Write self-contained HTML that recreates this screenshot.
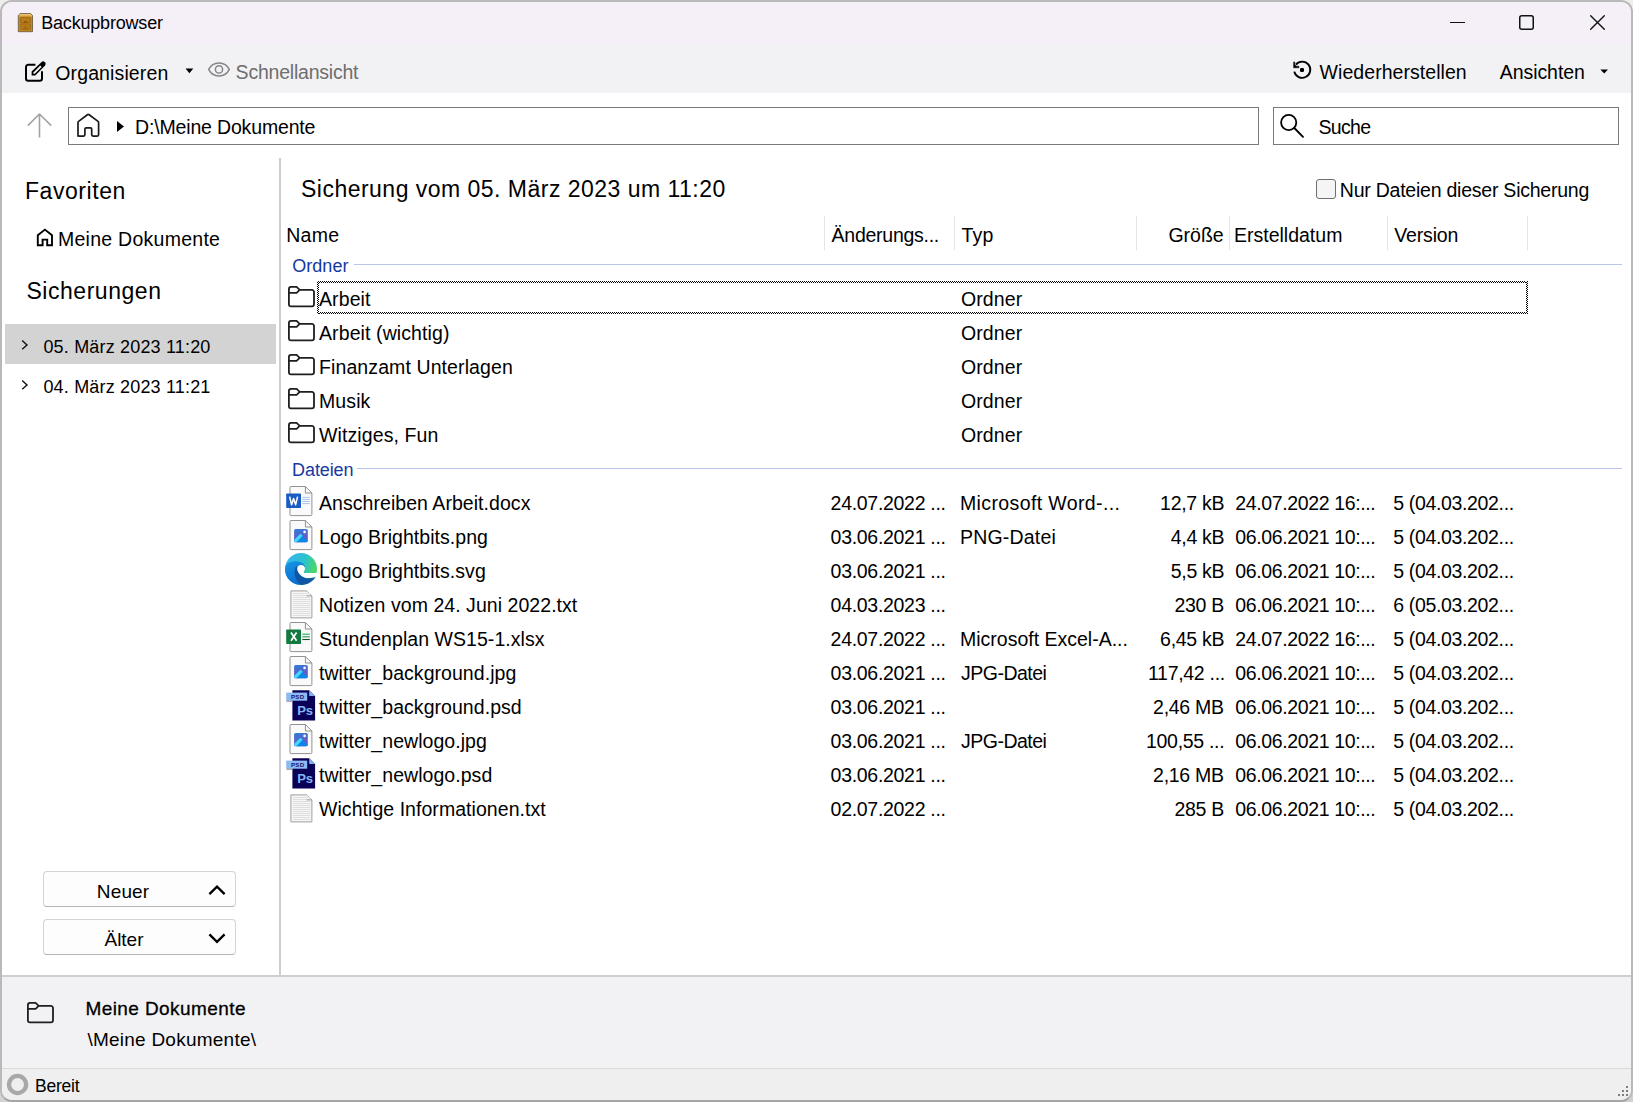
<!DOCTYPE html>
<html><head><meta charset="utf-8"><title>Backupbrowser</title>
<style>
html,body{margin:0;padding:0;width:1633px;height:1102px;overflow:hidden;background:#e9e9e9}
body{position:relative;font-family:'Liberation Sans', sans-serif;color:#000}
.t{position:absolute;white-space:pre;font-family:'Liberation Sans', sans-serif}
.a{position:absolute}
svg{position:absolute;overflow:visible}
</style></head><body>
<!-- window frame -->
<div class="a" style="left:0;top:0;width:1633px;height:1102px;background:#eeeeee"></div>
<div class="a" style="left:0;top:1086px;width:16px;height:16px;background:#d2d2d2"></div>
<div class="a" style="left:1617px;top:1086px;width:16px;height:16px;background:#d0d0d0"></div>
<div class="a" style="left:0;top:0;width:1633px;height:1102px;box-sizing:border-box;border:2px solid #b9b9b9;border-bottom-color:#a6a6a6;border-radius:12px;overflow:hidden;background:#fff">
  <div class="a" style="left:0;top:0;width:1629px;height:42.5px;background:#f5eff8"></div>
  <div class="a" style="left:0;top:42.5px;width:1629px;height:48.5px;background:#f2f2f4"></div>
  <div class="a" style="left:0;top:973px;width:1629px;height:2px;background:#cfcfcf"></div>
  <div class="a" style="left:0;top:975px;width:1629px;height:91px;background:#f2f2f4"></div>
  <div class="a" style="left:0;top:1066px;width:1629px;height:1px;background:#d9d9d9"></div>
  <div class="a" style="left:0;top:1067px;width:1629px;height:31px;background:#efefef"></div>
</div>
<!-- splitter -->
<div class="a" style="left:279px;top:158px;width:2px;height:817px;background:#cdcdcd"></div>
<!-- selection -->
<div class="a" style="left:5px;top:324px;width:271px;height:40px;background:#d3d3d3"></div>
<!-- address + search boxes -->
<div class="a" style="left:68px;top:107px;width:1191px;height:38px;box-sizing:border-box;border:1px solid #7a7a7a;background:#fff"></div>
<div class="a" style="left:1273px;top:107px;width:346px;height:38px;box-sizing:border-box;border:1px solid #7a7a7a;background:#fff"></div>
<!-- column separators -->
<div class="a" style="left:824px;top:216px;width:1px;height:34px;background:#e5e5e5"></div>
<div class="a" style="left:954px;top:216px;width:1px;height:34px;background:#e5e5e5"></div>
<div class="a" style="left:1136px;top:216px;width:1px;height:34px;background:#e5e5e5"></div>
<div class="a" style="left:1229px;top:216px;width:1px;height:34px;background:#e5e5e5"></div>
<div class="a" style="left:1387px;top:216px;width:1px;height:34px;background:#e5e5e5"></div>
<div class="a" style="left:1527px;top:216px;width:1px;height:34px;background:#e5e5e5"></div>
<!-- group lines -->
<div class="a" style="left:354px;top:264px;width:1268px;height:1px;background:#b7c6e8"></div>
<div class="a" style="left:357px;top:468px;width:1265px;height:1px;background:#b7c6e8"></div>
<!-- focus rect -->
<div class="a" style="left:317px;top:281px;width:1211px;height:2px;background-image:repeating-conic-gradient(#000 0 25%,#fff 0 50%);background-size:2px 2px"></div><div class="a" style="left:317px;top:312px;width:1211px;height:2px;background-image:repeating-conic-gradient(#000 0 25%,#fff 0 50%);background-size:2px 2px"></div><div class="a" style="left:317px;top:281px;width:2px;height:33px;background-image:repeating-conic-gradient(#000 0 25%,#fff 0 50%);background-size:2px 2px"></div><div class="a" style="left:1526px;top:281px;width:2px;height:33px;background-image:repeating-conic-gradient(#000 0 25%,#fff 0 50%);background-size:2px 2px"></div>
<!-- checkbox -->
<div class="a" style="left:1316px;top:179px;width:20px;height:20px;box-sizing:border-box;border:1px solid #6f6f6f;border-radius:3px;background:#f5f5f5"></div>
<!-- buttons -->
<div class="a" style="left:43px;top:871px;width:193px;height:36px;box-sizing:border-box;border:1px solid #d4d4d4;border-bottom-color:#b5b5b5;border-radius:4px;background:#fdfdfd"></div>
<div class="a" style="left:43px;top:919px;width:193px;height:36px;box-sizing:border-box;border:1px solid #d4d4d4;border-bottom-color:#b5b5b5;border-radius:4px;background:#fdfdfd"></div>
<!-- resize grip -->
<div class="a" style="left:1626px;top:1086px;width:2px;height:2px;background:#7f7f7f"></div>
<div class="a" style="left:1622px;top:1090px;width:2px;height:2px;background:#7f7f7f"></div>
<div class="a" style="left:1626px;top:1090px;width:2px;height:2px;background:#7f7f7f"></div>
<div class="a" style="left:1618px;top:1094px;width:2px;height:2px;background:#7f7f7f"></div>
<div class="a" style="left:1622px;top:1094px;width:2px;height:2px;background:#7f7f7f"></div>
<div class="a" style="left:1626px;top:1094px;width:2px;height:2px;background:#7f7f7f"></div>
<svg style="left:18px;top:13px" width="16" height="20" viewBox="0 0 16 20">
<defs><linearGradient id="cab" x1="0" y1="0" x2="0" y2="1"><stop offset="0" stop-color="#f4d591"/><stop offset="0.16" stop-color="#d9a040"/><stop offset="0.25" stop-color="#c8871f"/><stop offset="1" stop-color="#c8891f"/></linearGradient></defs>
<path d="M2.3,0.5 H12.6 L14.5,2.4 V18.7 H0.3 V2.4 Z" fill="url(#cab)" stroke="#6f6140" stroke-width="0.9"/>
<rect x="2.5" y="4.3" width="10" height="5.6" rx="0.6" fill="#b97a16" stroke="#9a6b20" stroke-width="0.9"/>
<rect x="2.5" y="11" width="10" height="5.6" rx="0.6" fill="#b97a16" stroke="#9a6b20" stroke-width="0.9"/>
<path d="M5.6,9.9 a2,2.2 0 0 1 4,0 Z" fill="#8e5c0e"/>
<rect x="5.8" y="14" width="3.6" height="1.9" rx="0.95" fill="#c07f10" stroke="#8a5c18" stroke-width="0.7"/>
</svg>
<div class="a" style="left:1450px;top:22px;width:15px;height:1.2px;background:#111"></div>
<svg style="left:1519px;top:15px" width="16" height="16" viewBox="0 0 16 16"><rect x="0.75" y="0.75" width="13.5" height="13.5" rx="2" fill="none" stroke="#111" stroke-width="1.5"/></svg>
<svg style="left:1590px;top:15px" width="16" height="16" viewBox="0 0 16 16"><path d="M0.7,0.7 L14.3,14.3 M14.3,0.7 L0.7,14.3" stroke="#111" stroke-width="1.4" stroke-linecap="round"/></svg>
<svg style="left:20px;top:56px" width="30" height="30" viewBox="0 0 30 30">
<path d="M15.4,8.8 H8.2 a2.2,2.2 0 0 0 -2.2,2.2 V22.6 a2.2,2.2 0 0 0 2.2,2.2 H19.8 a2.2,2.2 0 0 0 2.2,-2.2 V15.3" fill="none" stroke="#000" stroke-width="2"/>
<path d="M11.6,19.6 L11.6,15.6 L21.6,5.9 a2.5,2.5 0 0 1 3.5,3.5 L15.3,19.6 Z" fill="#000"/>
<path d="M13.4,17.8 L13.4,16.4 L20.3,9.6 L21.6,10.9 L14.8,17.8 Z" fill="#f2f2f4"/>
</svg>
<svg style="left:185px;top:68px" width="9" height="6" viewBox="0 0 9 6"><path d="M0.5,0.4 H8.3 L4.4,5.3 Z" fill="#000"/></svg>
<svg style="left:1600px;top:68.5px" width="9" height="6" viewBox="0 0 9 6"><path d="M0.4,0.4 H8 L4.2,4.6 Z" fill="#000"/></svg>
<svg style="left:204px;top:56px" width="30" height="30" viewBox="0 0 30 30">
<path d="M4.7,13.4 C7,8.5 10.5,6.9 15,6.9 C19.5,6.9 23,8.5 25.3,13.4 C23,18.3 19.5,19.9 15,19.9 C10.5,19.9 7,18.3 4.7,13.4 Z" fill="none" stroke="#858585" stroke-width="1.5" stroke-linejoin="round"/>
<circle cx="15" cy="13.4" r="3.6" fill="none" stroke="#858585" stroke-width="1.5"/>
</svg>
<svg style="left:1288px;top:56px" width="30" height="30" viewBox="0 0 30 30">
<path d="M6.3,15.6 A8.1,8.1 0 1 0 7.9,8.6" fill="none" stroke="#000" stroke-width="1.9"/>
<path d="M5.6,6.4 a0.6,0.6 0 0 1 1.2,0 V8.7 L8.5,10.2 H10.4 a0.8,0.8 0 0 1 0,1.6 H5.6 Z" fill="#000" stroke="#000" stroke-width="0.5" stroke-linejoin="round"/>
<rect x="12" y="12" width="4" height="4" rx="1.3" fill="#000"/>
</svg>
<svg style="left:26px;top:112px" width="28" height="28" viewBox="0 0 28 28"><path d="M13.5,25.4 V2.6 M1.8,13.6 L13.5,2 L25.2,13.6" fill="none" stroke="#a3a3a3" stroke-width="1.6" stroke-linejoin="round"/></svg>
<svg style="left:70px;top:108px" width="34" height="34" viewBox="0 0 34 34"><path d="M8,28.1 V14.6 a1.5,1.5 0 0 1 0.6,-1.2 L17.4,6.8 a1.5,1.5 0 0 1 1.8,0 L28,13.4 a1.5,1.5 0 0 1 0.6,1.2 V26.8 a1.3,1.3 0 0 1 -1.3,1.3 H23 a1.3,1.3 0 0 1 -1.3,-1.3 V21.1 a1.3,1.3 0 0 0 -1.3,-1.3 H16.2 a1.3,1.3 0 0 0 -1.3,1.3 V26.8 a1.3,1.3 0 0 1 -1.3,1.3 H9.3 a1.3,1.3 0 0 1 -1.3,-1.3 Z" fill="none" stroke="#1a1a1a" stroke-width="1.7" stroke-linejoin="round"/></svg>
<svg style="left:116px;top:120px" width="10" height="14" viewBox="0 0 10 14"><path d="M1,0.9 L8,6.5 L1,12.1 Z" fill="#000"/></svg>
<svg style="left:1276px;top:110px" width="32" height="32" viewBox="0 0 32 32"><circle cx="12.7" cy="12.5" r="7.6" fill="none" stroke="#000" stroke-width="1.8"/><path d="M18.3,18 L27,26.8" stroke="#000" stroke-width="1.9" stroke-linecap="round"/></svg>
<svg style="left:34px;top:226px" width="22" height="22" viewBox="0 0 22 22"><path d="M3.8,19.2 V9.3 L10.9,3.6 L18,9.3 V19.2 H13.2 V13.6 H8.6 V19.2 Z" fill="none" stroke="#000" stroke-width="1.9" stroke-linejoin="miter"/></svg>
<svg style="left:20px;top:339px" width="10" height="12" viewBox="0 0 10 12"><path d="M2.2,1.5 L7,5.9 L2.2,10.3" fill="none" stroke="#111" stroke-width="1.4"/></svg>
<svg style="left:20px;top:379px" width="10" height="12" viewBox="0 0 10 12"><path d="M2.2,1.5 L7,5.9 L2.2,10.3" fill="none" stroke="#111" stroke-width="1.4"/></svg>
<svg style="left:207px;top:882px" width="20" height="16" viewBox="0 0 20 16"><path d="M2.4,12.1 L10,4.6 L17.6,12.1" fill="none" stroke="#000" stroke-width="2.3"/></svg>
<svg style="left:207px;top:930px" width="20" height="16" viewBox="0 0 20 16"><path d="M2.4,4.4 L10,11.9 L17.6,4.4" fill="none" stroke="#000" stroke-width="2.3"/></svg>
<svg style="left:6px;top:1073px" width="24" height="24" viewBox="0 0 24 24"><circle cx="11.55" cy="11.5" r="8.55" fill="none" stroke="#a8a8a8" stroke-width="4.3"/></svg>
<svg style="left:288px;top:286px" width="27" height="22" viewBox="0 0 27 22"><path d="M0.9,18.3 V3 a2.1,2.1 0 0 1 2.1,-2.1 H8.6 l3.1,3 H23.9 a2.1,2.1 0 0 1 2.1,2.1 V18.3 a2.1,2.1 0 0 1 -2.1,2.1 H3 a2.1,2.1 0 0 1 -2.1,-2.1 Z M0.9,6.9 H8.6 l3.1,-3" fill="none" stroke="#1f1f1f" stroke-width="1.8" stroke-linejoin="round"/></svg>
<svg style="left:288px;top:320px" width="27" height="22" viewBox="0 0 27 22"><path d="M0.9,18.3 V3 a2.1,2.1 0 0 1 2.1,-2.1 H8.6 l3.1,3 H23.9 a2.1,2.1 0 0 1 2.1,2.1 V18.3 a2.1,2.1 0 0 1 -2.1,2.1 H3 a2.1,2.1 0 0 1 -2.1,-2.1 Z M0.9,6.9 H8.6 l3.1,-3" fill="none" stroke="#1f1f1f" stroke-width="1.8" stroke-linejoin="round"/></svg>
<svg style="left:288px;top:354px" width="27" height="22" viewBox="0 0 27 22"><path d="M0.9,18.3 V3 a2.1,2.1 0 0 1 2.1,-2.1 H8.6 l3.1,3 H23.9 a2.1,2.1 0 0 1 2.1,2.1 V18.3 a2.1,2.1 0 0 1 -2.1,2.1 H3 a2.1,2.1 0 0 1 -2.1,-2.1 Z M0.9,6.9 H8.6 l3.1,-3" fill="none" stroke="#1f1f1f" stroke-width="1.8" stroke-linejoin="round"/></svg>
<svg style="left:288px;top:388px" width="27" height="22" viewBox="0 0 27 22"><path d="M0.9,18.3 V3 a2.1,2.1 0 0 1 2.1,-2.1 H8.6 l3.1,3 H23.9 a2.1,2.1 0 0 1 2.1,2.1 V18.3 a2.1,2.1 0 0 1 -2.1,2.1 H3 a2.1,2.1 0 0 1 -2.1,-2.1 Z M0.9,6.9 H8.6 l3.1,-3" fill="none" stroke="#1f1f1f" stroke-width="1.8" stroke-linejoin="round"/></svg>
<svg style="left:288px;top:422px" width="27" height="22" viewBox="0 0 27 22"><path d="M0.9,18.3 V3 a2.1,2.1 0 0 1 2.1,-2.1 H8.6 l3.1,3 H23.9 a2.1,2.1 0 0 1 2.1,2.1 V18.3 a2.1,2.1 0 0 1 -2.1,2.1 H3 a2.1,2.1 0 0 1 -2.1,-2.1 Z M0.9,6.9 H8.6 l3.1,-3" fill="none" stroke="#1f1f1f" stroke-width="1.8" stroke-linejoin="round"/></svg>
<svg style="left:27px;top:1002px" width="27" height="22" viewBox="0 0 27 22"><path d="M0.9,18.3 V3 a2.1,2.1 0 0 1 2.1,-2.1 H8.6 l3.1,3 H23.9 a2.1,2.1 0 0 1 2.1,2.1 V18.3 a2.1,2.1 0 0 1 -2.1,2.1 H3 a2.1,2.1 0 0 1 -2.1,-2.1 Z M0.9,6.9 H8.6 l3.1,-3" fill="none" stroke="#1f1f1f" stroke-width="1.8" stroke-linejoin="round"/></svg>
<svg style="left:286px;top:486px" width="27" height="31" viewBox="-3 0 27 31"><path d="M1,1.5 a1,1 0 0 1 1,-1 H16.4 L22.9,7 V28.6 a1,1 0 0 1 -1,1 H2 a1,1 0 0 1 -1,-1 Z" fill="#fafafa" stroke="#8c8c8c" stroke-width="0.95"/><path d="M16.4,0.5 V7 H22.9" fill="none" stroke="#8c8c8c" stroke-width="0.95"/><rect x="-2.8" y="7.6" width="14.8" height="14.4" rx="0.7" fill="#1a5bc4"/><path d="M0.6,10.6 L2.6,18.8 L4.6,12.6 L6.6,18.8 L8.6,10.6" fill="none" stroke="#fff" stroke-width="1.5" stroke-linejoin="round"/><path d="M13.3,11.4 H20.8 M13.3,13.4 H20.8 M13.3,15.5 H20.8 M13.3,17.6 H20.8" stroke="#a9c4e8" stroke-width="1"/></svg>
<svg style="left:289px;top:520px" width="24" height="31" viewBox="0 0 24 31"><path d="M1,1.5 a1,1 0 0 1 1,-1 H16.4 L22.9,7 V28.6 a1,1 0 0 1 -1,1 H2 a1,1 0 0 1 -1,-1 Z" fill="#fafafa" stroke="#8c8c8c" stroke-width="0.95"/><path d="M16.4,0.5 V7 H22.9" fill="none" stroke="#8c8c8c" stroke-width="0.95"/><defs><linearGradient id="ig1" x1="0" y1="0" x2="0.3" y2="1"><stop offset="0" stop-color="#2a80d6"/><stop offset="1" stop-color="#7a4fc4"/></linearGradient></defs><g transform="translate(0,-1.5)"><rect x="5.1" y="10.5" width="13.7" height="13.2" rx="1.6" fill="url(#ig1)"/><path d="M5.1,21.5 L10.5,16 a1.3,1.3 0 0 1 1.9,0 L18.8,22.2 V22 a1.7,1.7 0 0 1 -1.7,1.7 H6.8 a1.7,1.7 0 0 1 -1.7,-1.7 Z" fill="#0b86e6"/><path d="M5.1,21.6 L10.5,16 a1.3,1.3 0 0 1 1.9,0 L13.6,17.2 L7.6,23.7 H6.8 a1.7,1.7 0 0 1 -1.7,-1.7 Z" fill="#45d6fa"/><circle cx="15.6" cy="13.4" r="1.3" fill="#fff"/></g></svg>
<svg style="left:285px;top:553px" width="32" height="32" viewBox="0 0 32 32"><defs><linearGradient id="eg1" x1="0" y1="0.3" x2="1" y2="0.6"><stop offset="0" stop-color="#37b4f2"/><stop offset="0.55" stop-color="#2cc3cd"/><stop offset="1" stop-color="#52dc50"/></linearGradient><linearGradient id="eg2" x1="0" y1="0" x2="0.4" y2="1"><stop offset="0" stop-color="#1896e4"/><stop offset="1" stop-color="#0a6fd0"/></linearGradient></defs><circle cx="16" cy="16" r="16" fill="url(#eg1)"/><path d="M0,16 C0.5,10.5 5,8.2 10.5,8.2 C15.5,8.2 19,10.5 20.2,13.6 L16,22 L14.5,31.9 C6,31.2 0,24.5 0,16 Z" fill="url(#eg2)"/><path d="M11,13.5 C8.5,17 8.8,26 15.5,31.9 C22,32.2 27.5,28.8 30.6,24 C25,26.2 19.5,25.6 15.8,22.4 C13.2,20 12,17.2 12.6,14 Z" fill="#0f57a4"/><path d="M12.2,15.6 C12.2,13 14,11.9 16,11.9 C18.4,11.9 20,13.4 20,15.4 C20,17.1 18.7,18.2 18.7,19.2 C18.7,19.9 19.6,20.1 21,20.1 H33 V23.2 L30.4,23.7 C25.5,25.8 20,25.6 16.3,22.7 C13.6,20.6 12.2,18.3 12.2,15.6 Z" fill="#fff"/></svg>
<svg style="left:290px;top:590.4px" width="24" height="30" viewBox="0 0 24 30"><path d="M0.9,0.9 H16.9 L21.9,5.9 V27.9 H0.9 Z" fill="#f6f6f6" stroke="#9a9a9a" stroke-width="0.95"/><path d="M3,3.5 H20.3" stroke="#dedede" stroke-width="1"/><path d="M3,5.5 H20.3" stroke="#dedede" stroke-width="1"/><path d="M3,7.5 H20.3" stroke="#dedede" stroke-width="1"/><path d="M3,9.5 H20.3" stroke="#dedede" stroke-width="1"/><path d="M3,11.5 H20.3" stroke="#dedede" stroke-width="1"/><path d="M3,13.5 H20.3" stroke="#dedede" stroke-width="1"/><path d="M3,15.5 H20.3" stroke="#dedede" stroke-width="1"/><path d="M3,17.5 H20.3" stroke="#dedede" stroke-width="1"/><path d="M3,19.5 H20.3" stroke="#dedede" stroke-width="1"/><path d="M3,21.5 H20.3" stroke="#dedede" stroke-width="1"/><path d="M3,23.5 H20.3" stroke="#dedede" stroke-width="1"/><path d="M3,25.5 H20.3" stroke="#dedede" stroke-width="1"/><path d="M16.9,0.9 L16.9,5.9 H21.9 Z" fill="#ececec"/><path d="M16.6,5.9 H21.9" stroke="#9a9a9a" stroke-width="0.95"/></svg>
<svg style="left:286px;top:622px" width="27" height="31" viewBox="-3 0 27 31"><path d="M1,1.5 a1,1 0 0 1 1,-1 H16.4 L22.9,7 V28.6 a1,1 0 0 1 -1,1 H2 a1,1 0 0 1 -1,-1 Z" fill="#fafafa" stroke="#8c8c8c" stroke-width="0.95"/><path d="M16.4,0.5 V7 H22.9" fill="none" stroke="#8c8c8c" stroke-width="0.95"/><rect x="-2.8" y="7.6" width="14.8" height="14.4" rx="0.7" fill="#137a3f"/><path d="M2,10.6 L7.6,18.8 M7.6,10.6 L2,18.8" fill="none" stroke="#fff" stroke-width="1.7"/><path d="M13.3,12.2 H20.8" stroke="#2bb36b" stroke-width="1.2"/><path d="M13.3,14.8 H20.8" stroke="#3a9c62" stroke-width="1.2"/><path d="M13.3,17.5 H20.8" stroke="#0b5126" stroke-width="1.1"/></svg>
<svg style="left:289px;top:656px" width="24" height="31" viewBox="0 0 24 31"><path d="M1,1.5 a1,1 0 0 1 1,-1 H16.4 L22.9,7 V28.6 a1,1 0 0 1 -1,1 H2 a1,1 0 0 1 -1,-1 Z" fill="#fafafa" stroke="#8c8c8c" stroke-width="0.95"/><path d="M16.4,0.5 V7 H22.9" fill="none" stroke="#8c8c8c" stroke-width="0.95"/><defs><linearGradient id="ig2" x1="0" y1="0" x2="0.3" y2="1"><stop offset="0" stop-color="#2a80d6"/><stop offset="1" stop-color="#7a4fc4"/></linearGradient></defs><g transform="translate(0,-1.5)"><rect x="5.1" y="10.5" width="13.7" height="13.2" rx="1.6" fill="url(#ig2)"/><path d="M5.1,21.5 L10.5,16 a1.3,1.3 0 0 1 1.9,0 L18.8,22.2 V22 a1.7,1.7 0 0 1 -1.7,1.7 H6.8 a1.7,1.7 0 0 1 -1.7,-1.7 Z" fill="#0b86e6"/><path d="M5.1,21.6 L10.5,16 a1.3,1.3 0 0 1 1.9,0 L13.6,17.2 L7.6,23.7 H6.8 a1.7,1.7 0 0 1 -1.7,-1.7 Z" fill="#45d6fa"/><circle cx="15.6" cy="13.4" r="1.3" fill="#fff"/></g></svg>
<svg style="left:285.6px;top:689.6px" width="30" height="32" viewBox="0 0 30 32"><path d="M6.4,0.3 H23.2 L29.1,5.9 V30.6 H6.4 Z" fill="#0a0157"/><path d="M23.2,0.3 L29.1,5.9 H23.2 Z" fill="#7fb3f0"/><rect x="0.2" y="2.6" width="21" height="8.1" fill="#8cbaf4"/><rect x="0.4" y="10.7" width="6" height="0.9" fill="#777"/><text x="5" y="9" font-family="Liberation Sans" font-weight="bold" font-size="6.2" fill="#1a1470" letter-spacing="0.2">PSD</text><text x="11.3" y="25.4" font-family="Liberation Sans" font-weight="bold" font-size="13" fill="#80b6f2" letter-spacing="-0.3">Ps</text></svg>
<svg style="left:289px;top:724px" width="24" height="31" viewBox="0 0 24 31"><path d="M1,1.5 a1,1 0 0 1 1,-1 H16.4 L22.9,7 V28.6 a1,1 0 0 1 -1,1 H2 a1,1 0 0 1 -1,-1 Z" fill="#fafafa" stroke="#8c8c8c" stroke-width="0.95"/><path d="M16.4,0.5 V7 H22.9" fill="none" stroke="#8c8c8c" stroke-width="0.95"/><defs><linearGradient id="ig3" x1="0" y1="0" x2="0.3" y2="1"><stop offset="0" stop-color="#2a80d6"/><stop offset="1" stop-color="#7a4fc4"/></linearGradient></defs><g transform="translate(0,-1.5)"><rect x="5.1" y="10.5" width="13.7" height="13.2" rx="1.6" fill="url(#ig3)"/><path d="M5.1,21.5 L10.5,16 a1.3,1.3 0 0 1 1.9,0 L18.8,22.2 V22 a1.7,1.7 0 0 1 -1.7,1.7 H6.8 a1.7,1.7 0 0 1 -1.7,-1.7 Z" fill="#0b86e6"/><path d="M5.1,21.6 L10.5,16 a1.3,1.3 0 0 1 1.9,0 L13.6,17.2 L7.6,23.7 H6.8 a1.7,1.7 0 0 1 -1.7,-1.7 Z" fill="#45d6fa"/><circle cx="15.6" cy="13.4" r="1.3" fill="#fff"/></g></svg>
<svg style="left:285.6px;top:757.6px" width="30" height="32" viewBox="0 0 30 32"><path d="M6.4,0.3 H23.2 L29.1,5.9 V30.6 H6.4 Z" fill="#0a0157"/><path d="M23.2,0.3 L29.1,5.9 H23.2 Z" fill="#7fb3f0"/><rect x="0.2" y="2.6" width="21" height="8.1" fill="#8cbaf4"/><rect x="0.4" y="10.7" width="6" height="0.9" fill="#777"/><text x="5" y="9" font-family="Liberation Sans" font-weight="bold" font-size="6.2" fill="#1a1470" letter-spacing="0.2">PSD</text><text x="11.3" y="25.4" font-family="Liberation Sans" font-weight="bold" font-size="13" fill="#80b6f2" letter-spacing="-0.3">Ps</text></svg>
<svg style="left:290px;top:794.4px" width="24" height="30" viewBox="0 0 24 30"><path d="M0.9,0.9 H16.9 L21.9,5.9 V27.9 H0.9 Z" fill="#f6f6f6" stroke="#9a9a9a" stroke-width="0.95"/><path d="M3,3.5 H20.3" stroke="#dedede" stroke-width="1"/><path d="M3,5.5 H20.3" stroke="#dedede" stroke-width="1"/><path d="M3,7.5 H20.3" stroke="#dedede" stroke-width="1"/><path d="M3,9.5 H20.3" stroke="#dedede" stroke-width="1"/><path d="M3,11.5 H20.3" stroke="#dedede" stroke-width="1"/><path d="M3,13.5 H20.3" stroke="#dedede" stroke-width="1"/><path d="M3,15.5 H20.3" stroke="#dedede" stroke-width="1"/><path d="M3,17.5 H20.3" stroke="#dedede" stroke-width="1"/><path d="M3,19.5 H20.3" stroke="#dedede" stroke-width="1"/><path d="M3,21.5 H20.3" stroke="#dedede" stroke-width="1"/><path d="M3,23.5 H20.3" stroke="#dedede" stroke-width="1"/><path d="M3,25.5 H20.3" stroke="#dedede" stroke-width="1"/><path d="M16.9,0.9 L16.9,5.9 H21.9 Z" fill="#ececec"/><path d="M16.6,5.9 H21.9" stroke="#9a9a9a" stroke-width="0.95"/></svg>
<div class="t" style="left:41.20px;top:14.26px;font-size:18px;line-height:18px;letter-spacing:-0.192px">Backupbrowser</div>
<div class="t" style="left:55.30px;top:63.59px;font-size:19.5px;line-height:19.5px;letter-spacing:0.118px">Organisieren</div>
<div class="t" style="left:235.60px;top:63.29px;font-size:19.5px;line-height:19.5px;letter-spacing:-0.215px;color:#6e6e6e">Schnellansicht</div>
<div class="t" style="left:1319.60px;top:63.09px;font-size:19.5px;line-height:19.5px;letter-spacing:0.053px">Wiederherstellen</div>
<div class="t" style="left:1499.70px;top:63.19px;font-size:19.5px;line-height:19.5px;letter-spacing:-0.050px">Ansichten</div>
<div class="t" style="left:135.00px;top:118.39px;font-size:19.5px;line-height:19.5px;letter-spacing:-0.159px">D:\Meine Dokumente</div>
<div class="t" style="left:1318.40px;top:117.69px;font-size:19.5px;line-height:19.5px;letter-spacing:-0.675px">Suche</div>
<div class="t" style="left:25.00px;top:179.93px;font-size:23px;line-height:23px;letter-spacing:0.550px">Favoriten</div>
<div class="t" style="left:58.00px;top:229.79px;font-size:19.5px;line-height:19.5px;letter-spacing:0.264px">Meine Dokumente</div>
<div class="t" style="left:26.50px;top:280.03px;font-size:23px;line-height:23px;letter-spacing:0.530px">Sicherungen</div>
<div class="t" style="left:43.40px;top:338.06px;font-size:18px;line-height:18px;letter-spacing:0.178px">05. März 2023 11:20</div>
<div class="t" style="left:43.40px;top:377.96px;font-size:18px;line-height:18px;letter-spacing:0.178px">04. März 2023 11:21</div>
<div class="t" style="left:96.80px;top:882.22px;font-size:19px;line-height:19px;letter-spacing:0.150px">Neuer</div>
<div class="t" style="left:104.50px;top:930.22px;font-size:19px;line-height:19px;letter-spacing:-0.025px">Älter</div>
<div class="t" style="left:301.00px;top:178.23px;font-size:23px;line-height:23px;letter-spacing:0.483px">Sicherung vom 05. März 2023 um 11:20</div>
<div class="t" style="left:1339.80px;top:181.19px;font-size:19.5px;line-height:19.5px;letter-spacing:-0.233px">Nur Dateien dieser Sicherung</div>
<div class="t" style="left:286.20px;top:226.19px;font-size:19.5px;line-height:19.5px;letter-spacing:0.333px">Name</div>
<div class="t" style="left:831.60px;top:226.19px;font-size:19.5px;line-height:19.5px;letter-spacing:-0.264px">Änderungs...</div>
<div class="t" style="left:961.40px;top:226.19px;font-size:19.5px;line-height:19.5px;letter-spacing:0.300px">Typ</div>
<div class="t" style="left:1168.40px;top:226.19px;font-size:19.5px;line-height:19.5px;letter-spacing:0.000px">Größe</div>
<div class="t" style="left:1234.00px;top:226.19px;font-size:19.5px;line-height:19.5px;letter-spacing:0.000px">Erstelldatum</div>
<div class="t" style="left:1394.20px;top:226.19px;font-size:19.5px;line-height:19.5px;letter-spacing:-0.133px">Version</div>
<div class="t" style="left:292.20px;top:256.86px;font-size:18px;line-height:18px;letter-spacing:0.060px;color:#1638a2">Ordner</div>
<div class="t" style="left:292.10px;top:461.36px;font-size:18px;line-height:18px;letter-spacing:-0.100px;color:#1638a2">Dateien</div>
<div class="t" style="left:319.00px;top:289.89px;font-size:19.5px;line-height:19.5px;letter-spacing:0.100px">Arbeit</div>
<div class="t" style="left:961.00px;top:289.89px;font-size:19.5px;line-height:19.5px;letter-spacing:0.100px">Ordner</div>
<div class="t" style="left:319.00px;top:323.89px;font-size:19.5px;line-height:19.5px;letter-spacing:0.100px">Arbeit (wichtig)</div>
<div class="t" style="left:961.00px;top:323.89px;font-size:19.5px;line-height:19.5px;letter-spacing:0.100px">Ordner</div>
<div class="t" style="left:319.00px;top:357.89px;font-size:19.5px;line-height:19.5px;letter-spacing:0.100px">Finanzamt Unterlagen</div>
<div class="t" style="left:961.00px;top:357.89px;font-size:19.5px;line-height:19.5px;letter-spacing:0.100px">Ordner</div>
<div class="t" style="left:319.00px;top:391.89px;font-size:19.5px;line-height:19.5px;letter-spacing:0.100px">Musik</div>
<div class="t" style="left:961.00px;top:391.89px;font-size:19.5px;line-height:19.5px;letter-spacing:0.100px">Ordner</div>
<div class="t" style="left:319.00px;top:425.89px;font-size:19.5px;line-height:19.5px;letter-spacing:0.100px">Witziges, Fun</div>
<div class="t" style="left:961.00px;top:425.89px;font-size:19.5px;line-height:19.5px;letter-spacing:0.100px">Ordner</div>
<div class="t" style="left:319.00px;top:493.79px;font-size:19.5px;line-height:19.5px;letter-spacing:0.050px">Anschreiben Arbeit.docx</div>
<div class="t" style="left:830.60px;top:493.79px;font-size:19.5px;line-height:19.5px;letter-spacing:-0.300px">24.07.2022 ...</div>
<div class="t" style="left:960.00px;top:493.79px;font-size:19.5px;line-height:19.5px;letter-spacing:0.376px">Microsoft Word-...</div>
<div class="t" style="left:1160.10px;top:493.79px;font-size:19.5px;line-height:19.5px;letter-spacing:-0.300px">12,7 kB</div>
<div class="t" style="left:1235.30px;top:493.79px;font-size:19.5px;line-height:19.5px;letter-spacing:-0.370px">24.07.2022 16:...</div>
<div class="t" style="left:1393.20px;top:493.79px;font-size:19.5px;line-height:19.5px;letter-spacing:-0.340px">5 (04.03.202...</div>
<div class="t" style="left:319.00px;top:527.79px;font-size:19.5px;line-height:19.5px;letter-spacing:0.050px">Logo Brightbits.png</div>
<div class="t" style="left:830.60px;top:527.79px;font-size:19.5px;line-height:19.5px;letter-spacing:-0.300px">03.06.2021 ...</div>
<div class="t" style="left:960.00px;top:527.79px;font-size:19.5px;line-height:19.5px;letter-spacing:0.188px">PNG-Datei</div>
<div class="t" style="left:1170.80px;top:527.79px;font-size:19.5px;line-height:19.5px;letter-spacing:-0.300px">4,4 kB</div>
<div class="t" style="left:1235.30px;top:527.79px;font-size:19.5px;line-height:19.5px;letter-spacing:-0.370px">06.06.2021 10:...</div>
<div class="t" style="left:1393.20px;top:527.79px;font-size:19.5px;line-height:19.5px;letter-spacing:-0.340px">5 (04.03.202...</div>
<div class="t" style="left:319.00px;top:561.79px;font-size:19.5px;line-height:19.5px;letter-spacing:0.050px">Logo Brightbits.svg</div>
<div class="t" style="left:830.60px;top:561.79px;font-size:19.5px;line-height:19.5px;letter-spacing:-0.300px">03.06.2021 ...</div>
<div class="t" style="left:1170.80px;top:561.79px;font-size:19.5px;line-height:19.5px;letter-spacing:-0.300px">5,5 kB</div>
<div class="t" style="left:1235.30px;top:561.79px;font-size:19.5px;line-height:19.5px;letter-spacing:-0.370px">06.06.2021 10:...</div>
<div class="t" style="left:1393.20px;top:561.79px;font-size:19.5px;line-height:19.5px;letter-spacing:-0.340px">5 (04.03.202...</div>
<div class="t" style="left:319.00px;top:595.79px;font-size:19.5px;line-height:19.5px;letter-spacing:0.050px">Notizen vom 24. Juni 2022.txt</div>
<div class="t" style="left:830.60px;top:595.79px;font-size:19.5px;line-height:19.5px;letter-spacing:-0.300px">04.03.2023 ...</div>
<div class="t" style="left:1174.50px;top:595.79px;font-size:19.5px;line-height:19.5px;letter-spacing:-0.300px">230 B</div>
<div class="t" style="left:1235.30px;top:595.79px;font-size:19.5px;line-height:19.5px;letter-spacing:-0.370px">06.06.2021 10:...</div>
<div class="t" style="left:1393.20px;top:595.79px;font-size:19.5px;line-height:19.5px;letter-spacing:-0.340px">6 (05.03.202...</div>
<div class="t" style="left:319.00px;top:629.79px;font-size:19.5px;line-height:19.5px;letter-spacing:0.050px">Stundenplan WS15-1.xlsx</div>
<div class="t" style="left:830.60px;top:629.79px;font-size:19.5px;line-height:19.5px;letter-spacing:-0.300px">24.07.2022 ...</div>
<div class="t" style="left:960.00px;top:629.79px;font-size:19.5px;line-height:19.5px;letter-spacing:0.000px">Microsoft Excel-A...</div>
<div class="t" style="left:1160.10px;top:629.79px;font-size:19.5px;line-height:19.5px;letter-spacing:-0.300px">6,45 kB</div>
<div class="t" style="left:1235.30px;top:629.79px;font-size:19.5px;line-height:19.5px;letter-spacing:-0.370px">24.07.2022 16:...</div>
<div class="t" style="left:1393.20px;top:629.79px;font-size:19.5px;line-height:19.5px;letter-spacing:-0.340px">5 (04.03.202...</div>
<div class="t" style="left:319.00px;top:663.79px;font-size:19.5px;line-height:19.5px;letter-spacing:0.050px">twitter_background.jpg</div>
<div class="t" style="left:830.60px;top:663.79px;font-size:19.5px;line-height:19.5px;letter-spacing:-0.300px">03.06.2021 ...</div>
<div class="t" style="left:961.00px;top:663.79px;font-size:19.5px;line-height:19.5px;letter-spacing:-0.500px">JPG-Datei</div>
<div class="t" style="left:1148.00px;top:663.79px;font-size:19.5px;line-height:19.5px;letter-spacing:-0.300px">117,42 ...</div>
<div class="t" style="left:1235.30px;top:663.79px;font-size:19.5px;line-height:19.5px;letter-spacing:-0.370px">06.06.2021 10:...</div>
<div class="t" style="left:1393.20px;top:663.79px;font-size:19.5px;line-height:19.5px;letter-spacing:-0.340px">5 (04.03.202...</div>
<div class="t" style="left:319.00px;top:697.79px;font-size:19.5px;line-height:19.5px;letter-spacing:0.050px">twitter_background.psd</div>
<div class="t" style="left:830.60px;top:697.79px;font-size:19.5px;line-height:19.5px;letter-spacing:-0.300px">03.06.2021 ...</div>
<div class="t" style="left:1153.10px;top:697.79px;font-size:19.5px;line-height:19.5px;letter-spacing:-0.300px">2,46 MB</div>
<div class="t" style="left:1235.30px;top:697.79px;font-size:19.5px;line-height:19.5px;letter-spacing:-0.370px">06.06.2021 10:...</div>
<div class="t" style="left:1393.20px;top:697.79px;font-size:19.5px;line-height:19.5px;letter-spacing:-0.340px">5 (04.03.202...</div>
<div class="t" style="left:319.00px;top:731.79px;font-size:19.5px;line-height:19.5px;letter-spacing:0.050px">twitter_newlogo.jpg</div>
<div class="t" style="left:830.60px;top:731.79px;font-size:19.5px;line-height:19.5px;letter-spacing:-0.300px">03.06.2021 ...</div>
<div class="t" style="left:961.00px;top:731.79px;font-size:19.5px;line-height:19.5px;letter-spacing:-0.500px">JPG-Datei</div>
<div class="t" style="left:1146.00px;top:731.79px;font-size:19.5px;line-height:19.5px;letter-spacing:-0.300px">100,55 ...</div>
<div class="t" style="left:1235.30px;top:731.79px;font-size:19.5px;line-height:19.5px;letter-spacing:-0.370px">06.06.2021 10:...</div>
<div class="t" style="left:1393.20px;top:731.79px;font-size:19.5px;line-height:19.5px;letter-spacing:-0.340px">5 (04.03.202...</div>
<div class="t" style="left:319.00px;top:765.79px;font-size:19.5px;line-height:19.5px;letter-spacing:0.050px">twitter_newlogo.psd</div>
<div class="t" style="left:830.60px;top:765.79px;font-size:19.5px;line-height:19.5px;letter-spacing:-0.300px">03.06.2021 ...</div>
<div class="t" style="left:1153.10px;top:765.79px;font-size:19.5px;line-height:19.5px;letter-spacing:-0.300px">2,16 MB</div>
<div class="t" style="left:1235.30px;top:765.79px;font-size:19.5px;line-height:19.5px;letter-spacing:-0.370px">06.06.2021 10:...</div>
<div class="t" style="left:1393.20px;top:765.79px;font-size:19.5px;line-height:19.5px;letter-spacing:-0.340px">5 (04.03.202...</div>
<div class="t" style="left:319.00px;top:799.79px;font-size:19.5px;line-height:19.5px;letter-spacing:0.050px">Wichtige Informationen.txt</div>
<div class="t" style="left:830.60px;top:799.79px;font-size:19.5px;line-height:19.5px;letter-spacing:-0.300px">02.07.2022 ...</div>
<div class="t" style="left:1174.50px;top:799.79px;font-size:19.5px;line-height:19.5px;letter-spacing:-0.300px">285 B</div>
<div class="t" style="left:1235.30px;top:799.79px;font-size:19.5px;line-height:19.5px;letter-spacing:-0.370px">06.06.2021 10:...</div>
<div class="t" style="left:1393.20px;top:799.79px;font-size:19.5px;line-height:19.5px;letter-spacing:-0.340px">5 (04.03.202...</div>
<div class="t" style="left:85.40px;top:999.22px;font-size:19px;line-height:19px;letter-spacing:0.421px;-webkit-text-stroke:0.3px #000">Meine Dokumente</div>
<div class="t" style="left:87.40px;top:1029.92px;font-size:19px;line-height:19px;letter-spacing:0.244px">\Meine Dokumente\</div>
<div class="t" style="left:35.00px;top:1077.89px;font-size:17.5px;line-height:17.5px;letter-spacing:-0.220px">Bereit</div>
</body></html>
